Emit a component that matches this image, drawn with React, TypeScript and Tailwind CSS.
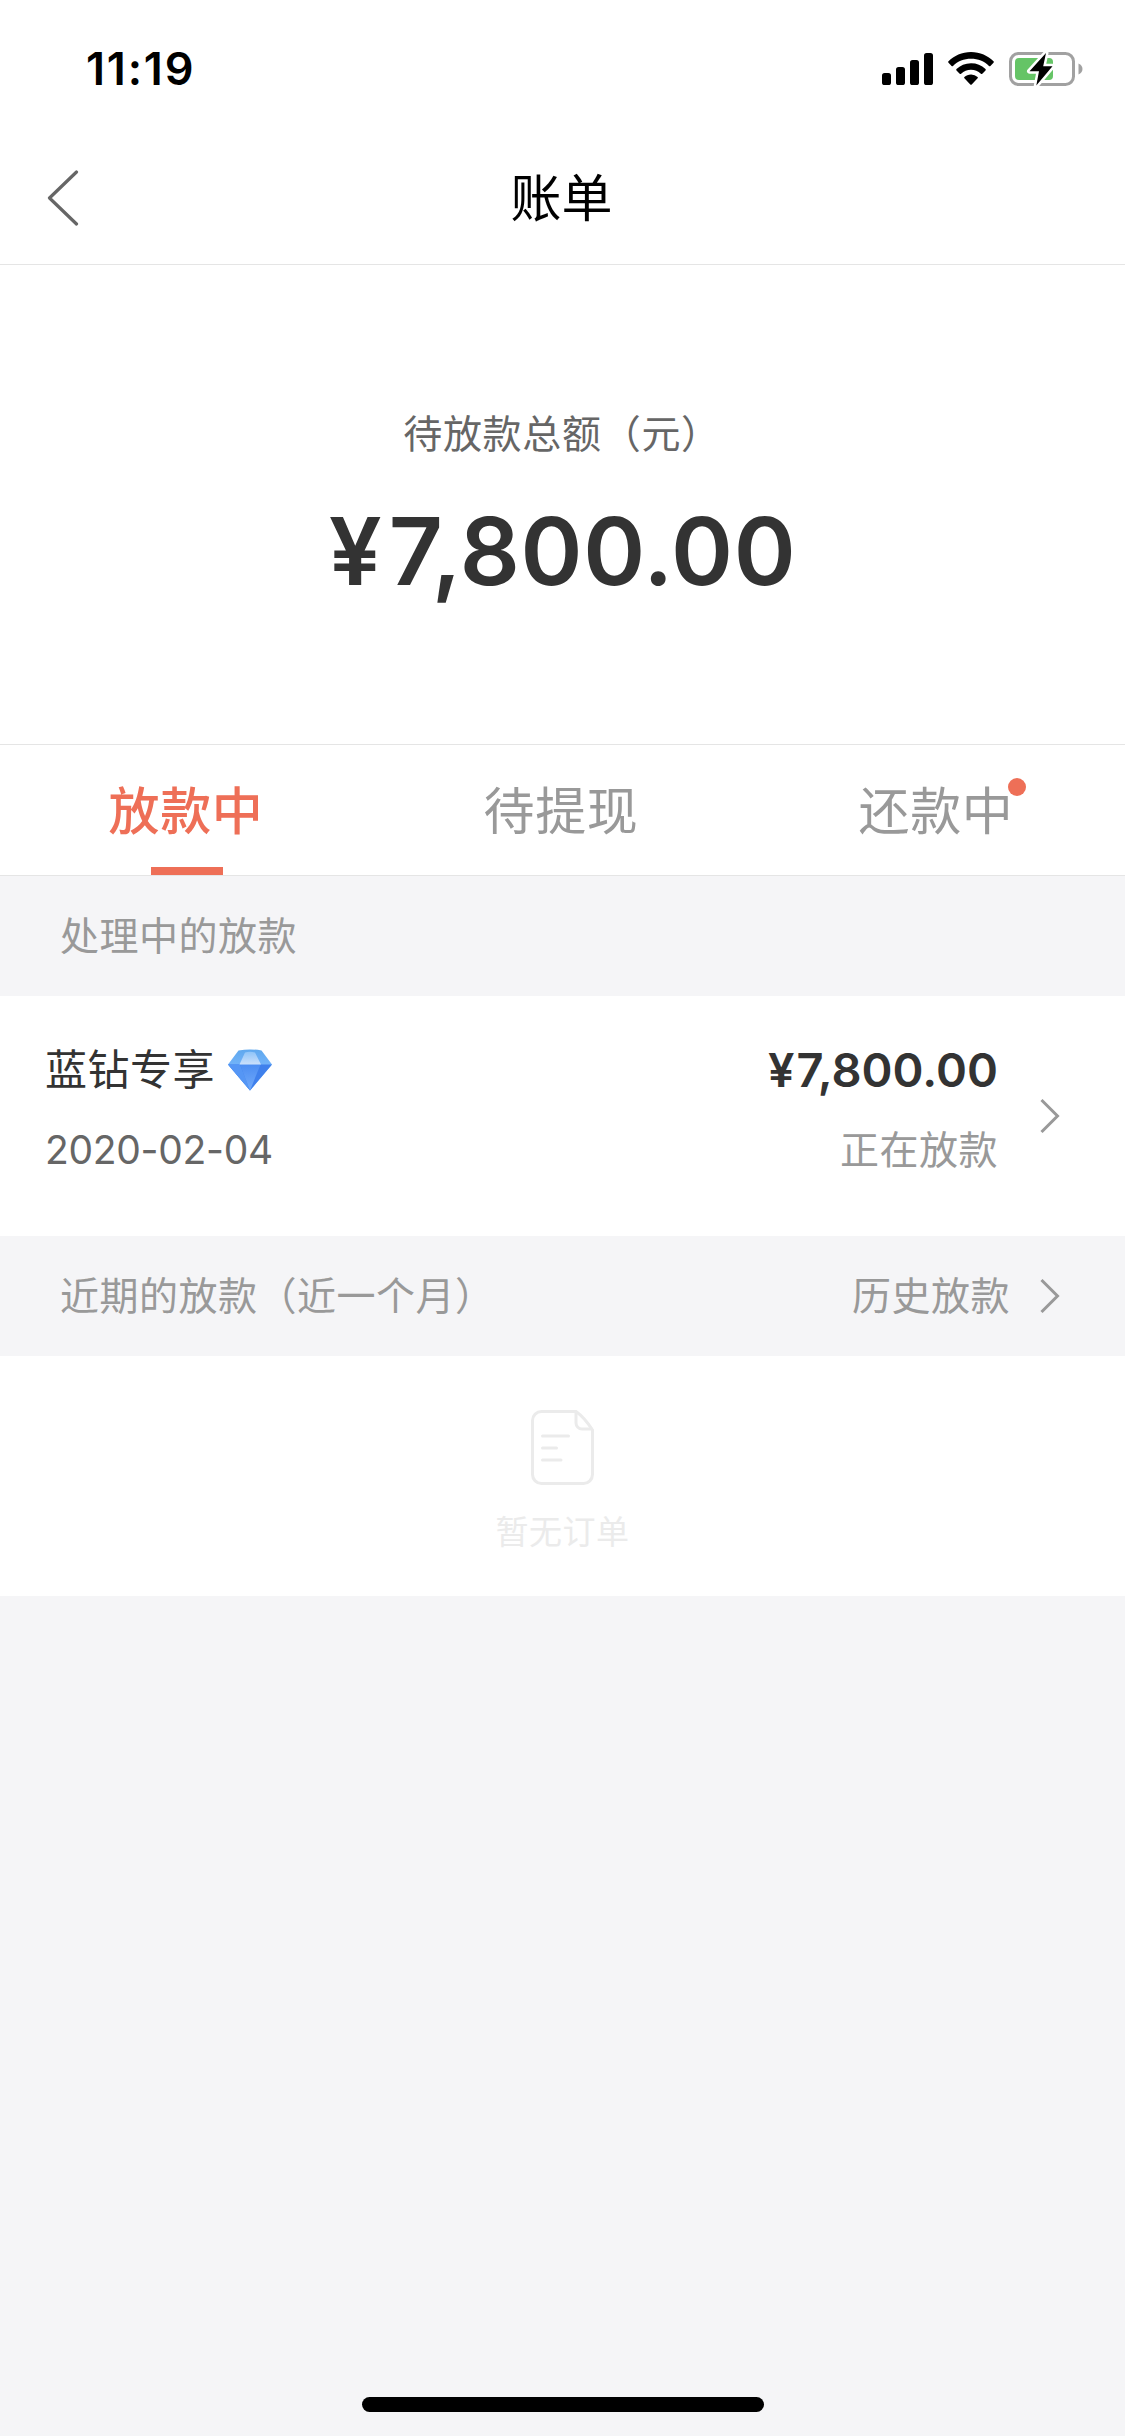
import React, { useState } from 'react';

interface TabItem {
  label: string;
  hasBadge?: boolean;
}

const tabs: TabItem[] = [
  { label: '放款中' },
  { label: '待提现' },
  { label: '还款中', hasBadge: true },
];

const SignalIcon: React.FC = () => (
  <svg width="51" height="34" viewBox="0 0 51 34" aria-hidden="true">
    <rect x="0" y="21" width="9" height="12" rx="2.6" />
    <rect x="14" y="15" width="9" height="18" rx="2.6" />
    <rect x="28" y="8" width="9" height="25" rx="2.6" />
    <rect x="42" y="1" width="9" height="32" rx="2.6" />
  </svg>
);

const WifiIcon: React.FC = () => (
  <svg width="46" height="34" viewBox="0 0 46 34" aria-hidden="true">
    <path d="M23 0C14 0 6 3.700 .5 9.300a1 1 0 0 0 0 1.400l3.100 3.200a1 1 0 0 0 1.400 0C9.700 9.300 16 6.800 23 6.800s13.300 2.500 18 7.100a1 1 0 0 0 1.400 0l3.100-3.200a1 1 0 0 0 0-1.400C40 3.700 32 0 23 0Z" />
    <path d="M23 11.200c-5.700 0-10.800 2.200-14.500 5.800a1 1 0 0 0 0 1.400l3.200 3.300a1 1 0 0 0 1.400 0 14.500 14.500 0 0 1 19.800 0 1 1 0 0 0 1.400 0l3.200-3.300a1 1 0 0 0 0-1.400A20.800 20.800 0 0 0 23 11.200Z" />
    <path d="M23 22.400c-2.600 0-4.900.900-6.600 2.500a1 1 0 0 0 0 1.400l5.900 6.200a1 1 0 0 0 1.400 0l5.900-6.200a1 1 0 0 0 0-1.400 9.600 9.600 0 0 0-6.600-2.500Z" />
  </svg>
);

const BatteryIcon: React.FC = () => (
  <svg width="74" height="36" viewBox="0 0 74 36" aria-hidden="true">
    <rect x="1.500" y="2.500" width="63" height="31" rx="8" fill="none" stroke="#a1a1a1" strokeWidth="3" />
    <path d="M69.500 12.500c2.500 1 4 3.200 4 5.500s-1.500 4.500-4 5.500Z" fill="#a1a1a1" />
    <rect x="6" y="7" width="38" height="22" rx="4" fill="#65c466" />
    <path
      d="M37 2 20.500 20.200h9.500L27.300 34.500 43.500 15.300h-9.300Z"
      fill="#000"
      stroke="#fff"
      strokeWidth="5"
      strokeLinejoin="round"
      paintOrder="stroke"
    />
  </svg>
);

const BackIcon: React.FC = () => (
  <svg width="32" height="56" viewBox="0 0 32 56" fill="none" aria-hidden="true">
    <path d="M29.500 2 2.500 28l27 26" stroke="#666" strokeWidth="3.200" strokeLinecap="round" strokeLinejoin="round" />
  </svg>
);

const ArrowIcon: React.FC = () => (
  <svg width="20" height="36" viewBox="0 0 20 36" fill="none" aria-hidden="true">
    <path d="M1.500 2 17.500 18l-16 16" stroke="#999" strokeWidth="3" />
  </svg>
);

const DiamondIcon: React.FC = () => (
  <svg width="46" height="42" viewBox="0 0 46 42" aria-hidden="true">
    <defs>
      <linearGradient id="gemTop" x1="0" y1="0" x2="0" y2="1">
        <stop offset="0" stopColor="#5fa8ee" />
        <stop offset=".4" stopColor="#74b4fa" />
      </linearGradient>
      <linearGradient id="gemTable" x1="0" y1="0" x2="0" y2="1">
        <stop offset="0" stopColor="#8fc4f8" />
        <stop offset="1" stopColor="#cbe0fb" />
      </linearGradient>
      <linearGradient id="gemBottom" x1="0" y1="0" x2="0" y2="1">
        <stop offset="0" stopColor="#4c8df2" />
        <stop offset="1" stopColor="#72abfa" />
      </linearGradient>
    </defs>
    <path d="M11.500 1.500Q23-.5 34.500 1.500L45 15.500 23 41.500 1 15.500Z" fill="url(#gemTop)" />
    <path d="M1 15.500h44L23 41.500Z" fill="#3f80ec" />
    <path d="M1 15.500h12L23 41.500Z" fill="#5596f5" />
    <path d="M13 15.500h20.500L23 41.500Z" fill="url(#gemBottom)" />
    <path d="M18 3.500q5-1.500 10 0l6 12H12.500Z" fill="url(#gemTable)" />
  </svg>
);

const EmptyIcon: React.FC = () => (
  <svg width="63" height="76" viewBox="0 0 63 76" fill="none" stroke="#ebebeb" strokeWidth="3" aria-hidden="true">
    <path d="M45 1.500H10.500a9 9 0 0 0-9 9v54a9 9 0 0 0 9 9h42a9 9 0 0 0 9-9V20C57 13 50 5 45 1.500Z" />
    <path d="M45 1.500V13a6 6 0 0 0 6 6h10.500" />
    <path d="M11.500 26h26M11.500 38h14M11.500 50h18.500" strokeLinecap="round" />
  </svg>
);

const StatusBar: React.FC = () => (
  <div className="flex h-[132px] items-start justify-between pr-[42px] pl-[86px]">
    <span className="mt-[42px] text-[45px] leading-[54px] font-semibold tracking-[1.8px] text-black">11:19</span>
    <div className="mt-[51px] flex items-center">
      <SignalIcon />
      <div className="ml-[15px]">
        <WifiIcon />
      </div>
      <div className="ml-[15px]">
        <BatteryIcon />
      </div>
    </div>
  </div>
);

export const App: React.FC = () => {
  const [active, setActive] = useState(0);

  return (
    <div className="flex h-[2436px] w-[1125px] flex-col bg-[#f5f5f7] font-[Inter,'Noto_Sans_CJK_SC',sans-serif] text-[39px] leading-[60px] text-[#999]">
      <header className="h-[265px] border-b border-[#e5e5e5] bg-white">
        <StatusBar />
        <div className="grid h-[132px] grid-cols-3 items-center px-[47px]">
          <button aria-label="返回" className="justify-self-start">
            <BackIcon />
          </button>
          <h1 className="pt-[2px] pr-[2px] text-center text-[51px] text-black">账单</h1>
        </div>
      </header>

      {/* Total amount */}
      <section className="flex h-[480px] flex-col items-center border-b border-[#e5e5e5] bg-white pt-[139px]">
        <p className="pr-[1px] tracking-[0.7px] text-[#666]">待放款总额（元）</p>
        <p className="mt-[31px] text-[94px] leading-[112px] font-semibold tracking-[0.6px] text-[#333]">
          <span className="tracking-[7px]">¥</span>7,800.00
        </p>
      </section>

      {/* Tabs */}
      <nav className="grid h-[131px] grid-cols-3 border-b border-[#e5e5e5] bg-white">
        {tabs.map((tab, index) => (
          <button
            key={tab.label}
            onClick={() => setActive(index)}
            className={`relative flex justify-center pt-[27px] pr-[3px] text-[51px] leading-[80px] tracking-[0.7px] ${
              index === active ? 'font-medium text-[#ee6f57]' : ''
            }`}
          >
            <span className="relative">
              {tab.label}
              {tab.hasBadge && <span className="absolute top-[6px] -right-[12px] size-[18px] rounded-full bg-[#ee6f57]" />}
            </span>
            {index === active && <span className="absolute bottom-0 left-[151px] h-[8px] w-[72px] bg-[#ee6f57]" />}
          </button>
        ))}
      </nav>

      <div className="flex h-[120px] items-center px-[60px] tracking-[0.5px]">处理中的放款</div>

      <section className="flex h-[240px] items-center bg-white pr-[65px] pl-[45px]">
        <div className="flex-1 pb-[12px]">
          <div className="flex items-center gap-[12px] text-[42px] tracking-[0.5px] text-[#333]">
            蓝钻专享
            <DiamondIcon />
          </div>
          <p className="mt-[20px] tracking-[-0.3px] text-[#666]">2020-02-04</p>
        </div>
        <div className="pb-[12px] text-right">
          <p className="text-[47px] font-semibold text-[#333]">
            <span className="tracking-[2px]">¥</span>7,800.00
          </p>
          <p className="mt-[20px] tracking-[0.5px]">正在放款</p>
        </div>
        <div className="ml-[42px]">
          <ArrowIcon />
        </div>
      </section>

      <div className="flex h-[120px] items-center justify-between pr-[65px] pl-[60px] tracking-[0.5px]">
        <span>近期的放款（近一个月）</span>
        <button className="flex items-center gap-[30px]">
          历史放款
          <ArrowIcon />
        </button>
      </div>

      {/* Empty list */}
      <section className="flex h-[240px] flex-col items-center bg-white pt-[54px]">
        <EmptyIcon />
        <p className="mt-[16px] text-[33px] tracking-[0.5px] text-[#ebebeb]">暂无订单</p>
      </section>

      <div className="mx-auto mt-auto mb-[24px] h-[15px] w-[402px] rounded-full bg-black" />
    </div>
  );
};

export default App;
